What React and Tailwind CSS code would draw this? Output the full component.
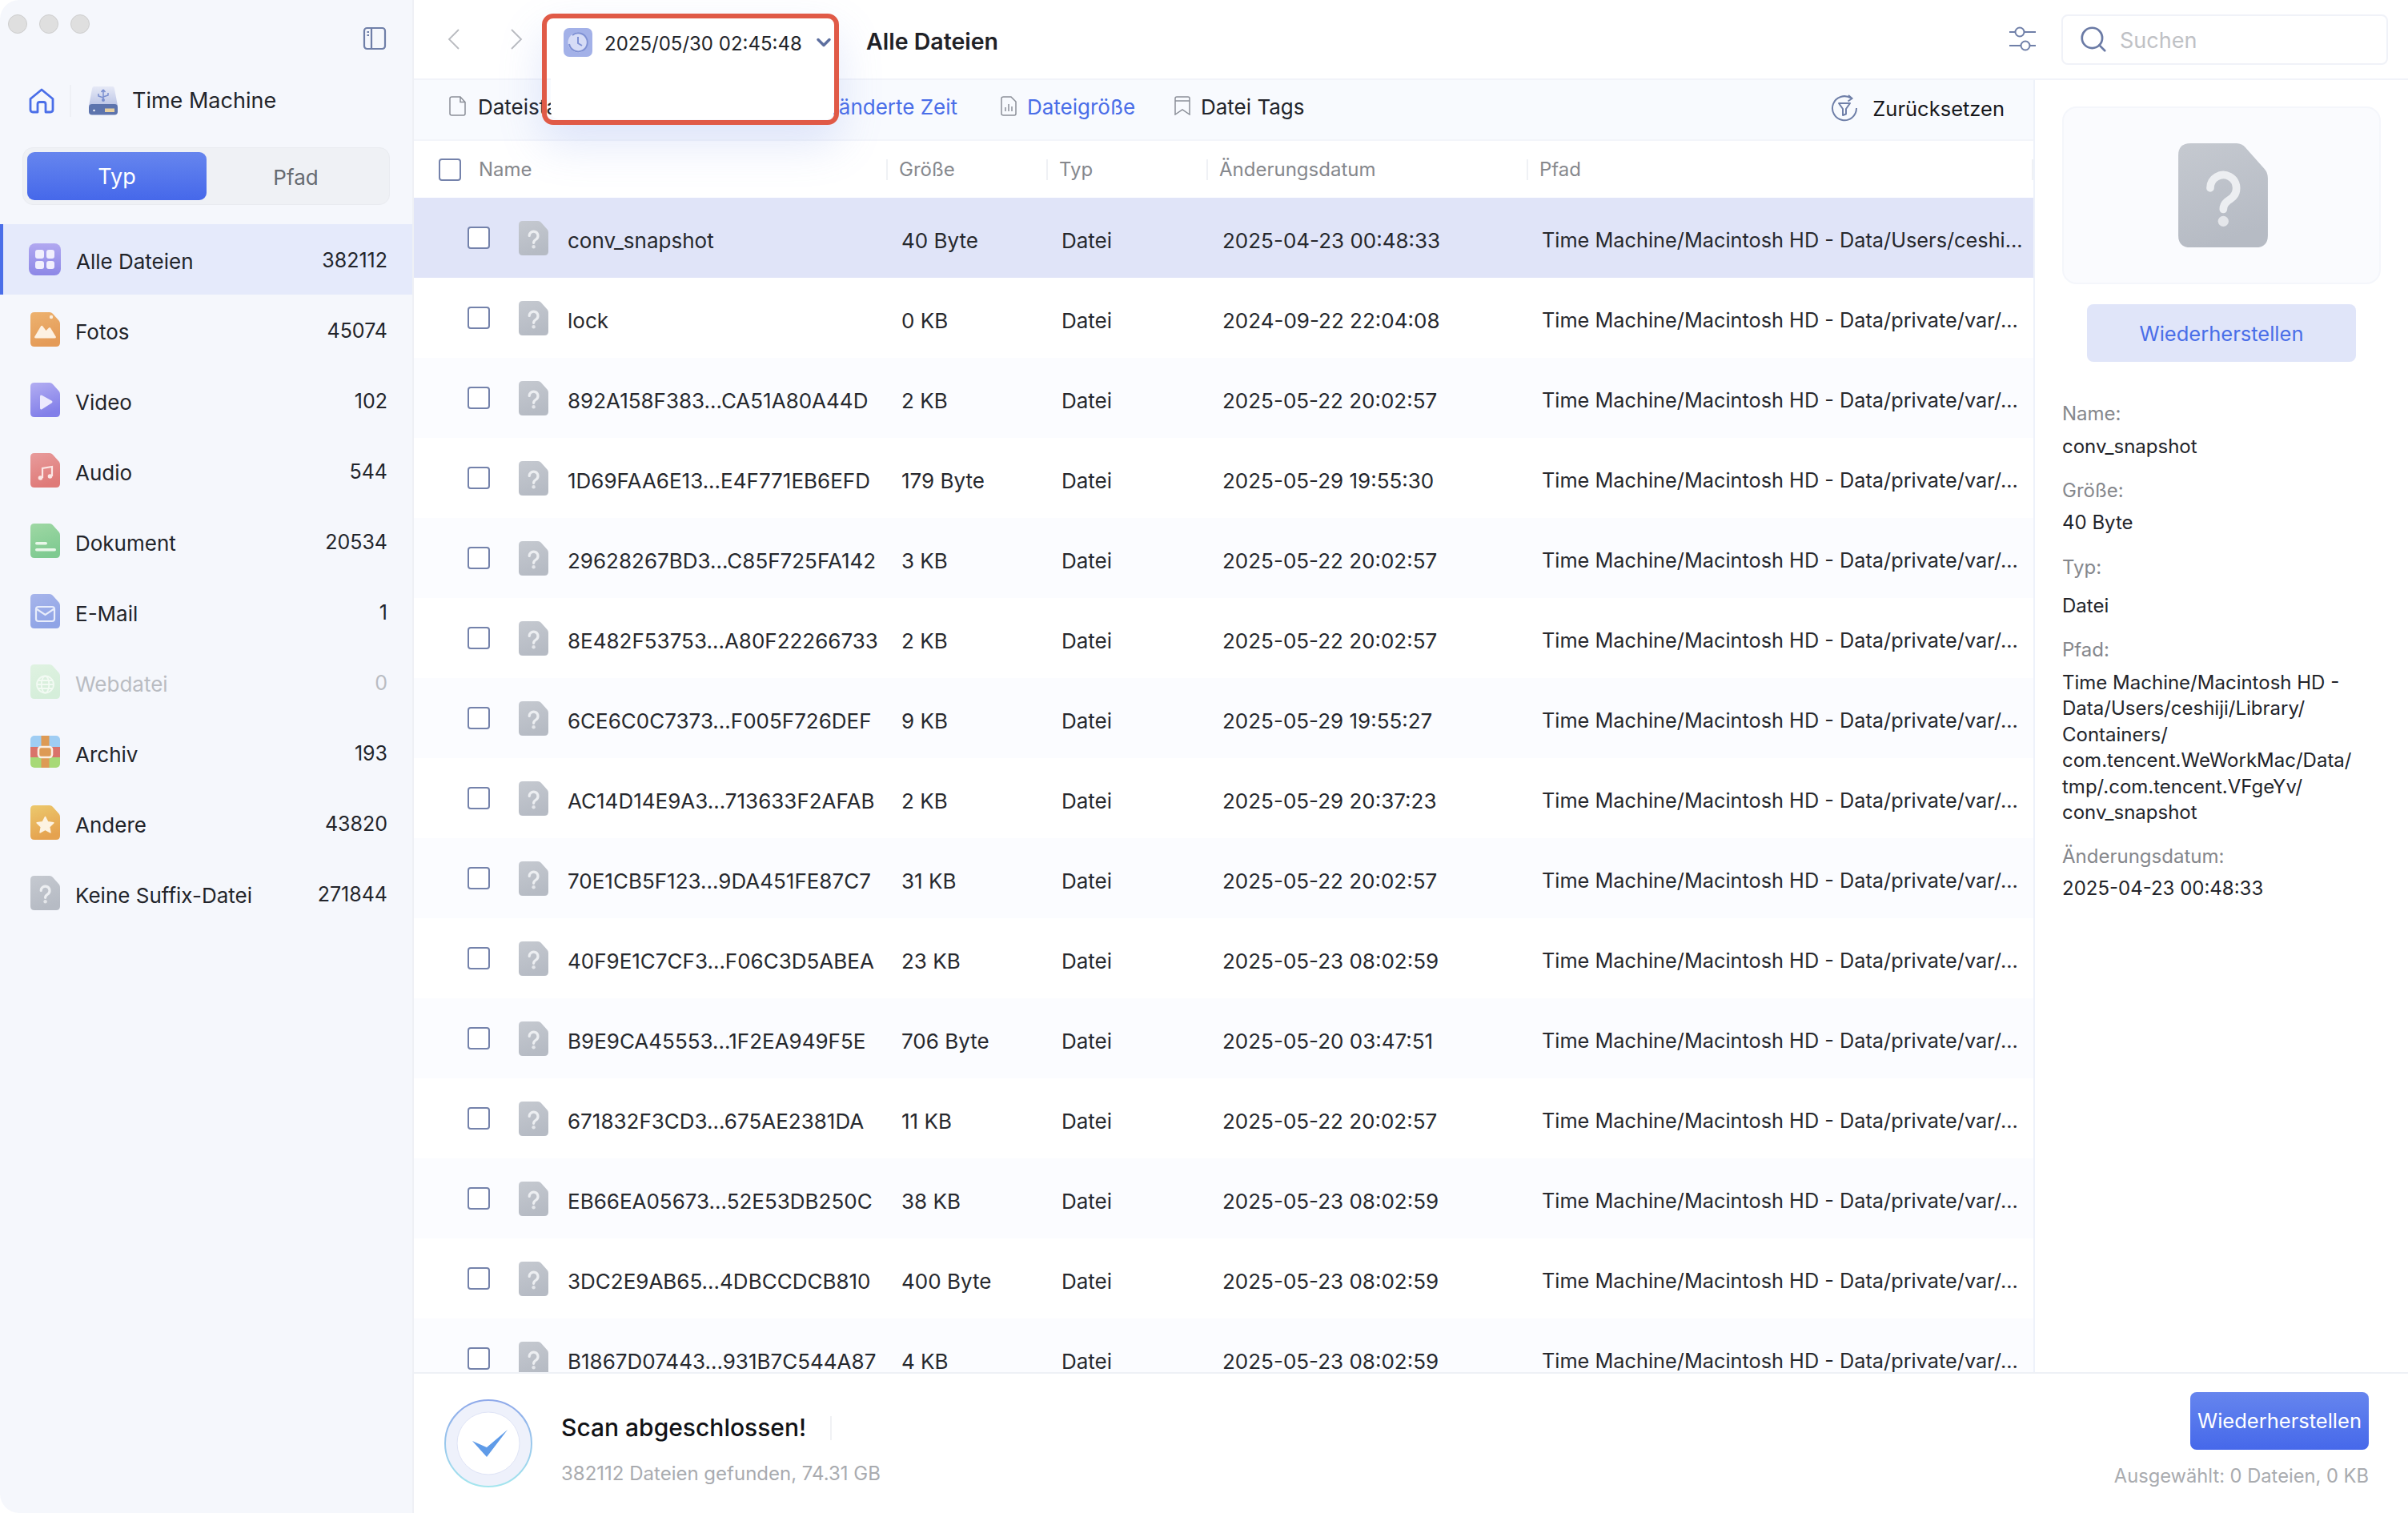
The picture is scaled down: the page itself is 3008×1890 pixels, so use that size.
import { ChevronDown, Search } from 'lucide-react';

const categories = [
  { name: 'Fotos', count: '45074', icon: 'fotos' },
  { name: 'Video', count: '102', icon: 'video' },
  { name: 'Audio', count: '544', icon: 'audio' },
  { name: 'Dokument', count: '20534', icon: 'doc' },
  { name: 'E-Mail', count: '1', icon: 'mail' },
  { name: 'Webdatei', count: '0', icon: 'web', off: true },
  { name: 'Archiv', count: '193', icon: 'zip' },
  { name: 'Andere', count: '43820', icon: 'star' },
  { name: 'Keine Suffix-Datei', count: '271844', icon: 'unknown' },
];

const varPath = 'Time Machine/Macintosh HD - Data/private/var/...';

const files = [
  ['conv_snapshot', '40 Byte', '2025-04-23 00:48:33', 'Time Machine/Macintosh HD - Data/Users/ceshi...'],
  ['lock', '0 KB', '2024-09-22 22:04:08', varPath],
  ['892A158F383...CA51A80A44D', '2 KB', '2025-05-22 20:02:57', varPath],
  ['1D69FAA6E13...E4F771EB6EFD', '179 Byte', '2025-05-29 19:55:30', varPath],
  ['29628267BD3...C85F725FA142', '3 KB', '2025-05-22 20:02:57', varPath],
  ['8E482F53753...A80F22266733', '2 KB', '2025-05-22 20:02:57', varPath],
  ['6CE6C0C7373...F005F726DEF', '9 KB', '2025-05-29 19:55:27', varPath],
  ['AC14D14E9A3...713633F2AFAB', '2 KB', '2025-05-29 20:37:23', varPath],
  ['70E1CB5F123...9DA451FE87C7', '31 KB', '2025-05-22 20:02:57', varPath],
  ['40F9E1C7CF3...F06C3D5ABEA', '23 KB', '2025-05-23 08:02:59', varPath],
  ['B9E9CA45553...1F2EA949F5E', '706 Byte', '2025-05-20 03:47:51', varPath],
  ['671832F3CD3...675AE2381DA', '11 KB', '2025-05-22 20:02:57', varPath],
  ['EB66EA05673...52E53DB250C', '38 KB', '2025-05-23 08:02:59', varPath],
  ['3DC2E9AB65...4DBCCDCB810', '400 Byte', '2025-05-23 08:02:59', varPath],
  ['B1867D07443...931B7C544A87', '4 KB', '2025-05-23 08:02:59', varPath],
];

const SHEET = 'M5 0H24Q26.2 0 27.8 1.8L35.6 10.6Q37 12.2 37 14.4V38Q37 43 32 43H5Q0 43 0 38V5Q0 0 5 0Z';

// one file shaped sheet, the glyph goes on top of it
function Sheet({ id, from, to, children, className = 'w-[37px] h-[43px]' }) {
  return (
    <svg viewBox="0 0 37 43" className={className}>
      <defs>
        <linearGradient id={id} x1="0" y1="0" x2="0.3" y2="1">
          <stop offset="0" stopColor={from} />
          <stop offset="1" stopColor={to} />
        </linearGradient>
      </defs>
      <path d={SHEET} fill={`url(#${id})`} />
      {children}
    </svg>
  );
}

function Question({ id, className }) {
  return (
    <Sheet id={id} from="#c5c9d0" to="#b6bbc4" className={className}>
      <path d="M13.2 18.5a5.4 5.4 0 1 1 8.4 4.5c-2 1.3-3 2.3-3 4.3" fill="none" stroke="#eceef1" strokeWidth="3.2" strokeLinecap="round" />
      <circle cx="18.6" cy="32.2" r="2.2" fill="#e4e6ea" />
    </Sheet>
  );
}

function CategoryIcon({ type }) {
  if (type === 'fotos')
    return (
      <Sheet id="g-fotos" from="#edb26f" to="#e49b58">
        <circle cx="26" cy="6" r="2.2" fill="#fbeedd" />
        <path d="M5 31L13 17.5Q14.2 16 15.4 17.5L19.5 23L23 19.5Q24.2 18.5 25.2 19.8L32 31Q32 32.5 30 32.5H7Q5 32.5 5 31Z" fill="#fdf1e2" />
      </Sheet>
    );
  if (type === 'video')
    return (
      <Sheet id="g-video" from="#b3aef2" to="#827fe9">
        <path d="M12 17.5Q12 14.5 14.7 16L26.5 22.5Q28.5 24 26.5 25.5L14.7 33Q12 34.5 12 31.5Z" fill="#eceafd" />
      </Sheet>
    );
  if (type === 'audio')
    return (
      <Sheet id="g-audio" from="#e89c9c" to="#df7a78">
        <path d="M15 31V19L27 17V29" fill="none" stroke="#fbe6e4" strokeWidth="2.2" />
        <circle cx="12.5" cy="31" r="2.8" fill="#fbe6e4" />
        <circle cx="24.5" cy="29" r="2.8" fill="#fbe6e4" />
      </Sheet>
    );
  if (type === 'doc')
    return (
      <Sheet id="g-doc" from="#9fd8a4" to="#7fca91">
        <rect x="6" y="23" width="15" height="3.6" rx="1.8" fill="#e9f7ea" />
        <rect x="6" y="31" width="26" height="3.6" rx="1.8" fill="#e9f7ea" />
      </Sheet>
    );
  if (type === 'mail')
    return (
      <Sheet id="g-mail" from="#a7b5eb" to="#8fa4e6">
        <rect x="7" y="16" width="23" height="18" rx="3" fill="none" stroke="#e8edfb" strokeWidth="2.2" />
        <path d="M8 19L18.5 26L29 19" fill="none" stroke="#e8edfb" strokeWidth="2.2" />
      </Sheet>
    );
  if (type === 'web')
    return (
      <Sheet id="g-web" from="#dff2e1" to="#d5eeda">
        <g fill="none" stroke="#f2faf3" strokeWidth="1.8">
          <circle cx="18.5" cy="25" r="10.5" />
          <ellipse cx="18.5" cy="25" rx="4.8" ry="10.5" />
          <path d="M8 25H29M9.5 20H27.5M9.5 30H27.5" />
        </g>
      </Sheet>
    );
  if (type === 'zip')
    return (
      <svg viewBox="0 0 37 40" className="w-[37px] h-[40px]">
        <defs>
          <clipPath id="zip-clip">
            <rect width="37" height="40" rx="5" />
          </clipPath>
        </defs>
        <g clipPath="url(#zip-clip)">
          <rect width="37" height="14" fill="#9fcdf3" />
          <rect y="14" width="37" height="13" fill="#d9736a" />
          <rect y="27" width="37" height="13" fill="#a7d977" />
          <rect x="13.5" width="10" height="40" fill="#dd9a55" />
          <rect x="10" y="14" width="17" height="13" rx="3.5" fill="#dd9a55" stroke="#fbeee3" strokeWidth="2.6" />
        </g>
      </svg>
    );
  if (type === 'star')
    return (
      <Sheet id="g-star" from="#ecc96d" to="#e5a24f">
        <path d="M18.5 14.5L21.7 20.8L28.8 21.9L23.6 26.8L24.9 33.8L18.5 30.4L12.1 33.8L13.4 26.8L8.2 21.9L15.3 20.8Z" fill="#fdf3e2" stroke="#fdf3e2" strokeWidth="1.6" strokeLinejoin="round" />
      </Sheet>
    );
  return <Question id="g-side-unknown" />;
}

function Category({ item }) {
  return (
    <div className="h-[88px] pl-[38px] pr-[31px] flex items-center">
      <div className="w-[56px] shrink-0 flex items-center">
        <CategoryIcon type={item.icon} />
      </div>
      <span className={`mt-[6px] text-[26px] ${item.off ? 'text-[#b9bcc2]' : 'text-[#22242a]'}`}>{item.name}</span>
      <span className={`mt-[6px] ml-auto text-[25px] ${item.off ? 'text-[#b9bcc2]' : 'text-[#22242a]'}`}>{item.count}</span>
    </div>
  );
}

function Sidebar() {
  return (
    <aside className="w-[517px] shrink-0 bg-[#f5f7fc] border-r-2 border-[#eef0f5] flex flex-col">
      <div className="h-[104px] pl-[10px] pr-[32px] flex items-start justify-between">
        <div className="flex mt-[18px] gap-[15px]">
          <span className="size-[24px] rounded-full bg-[#dfdfdf] border border-[#cdcdcd]" />
          <span className="size-[24px] rounded-full bg-[#dfdfdf] border border-[#cdcdcd]" />
          <span className="size-[24px] rounded-full bg-[#dfdfdf] border border-[#cdcdcd]" />
        </div>
        <svg viewBox="0 0 30 30" className="size-[30px] mt-[33px]" fill="none" stroke="#6f7fa8" strokeWidth="2.2">
          <rect x="2" y="2" width="26" height="26" rx="3.5" />
          <path d="M11 2V28M5.5 7H8M5.5 11H8" />
        </svg>
      </div>
      <div className="h-[44px] flex items-center pl-[36px]">
        <svg viewBox="0 0 32 32" className="size-[32px]" fill="none" stroke="#4a6ee8" strokeWidth="2.8" strokeLinejoin="round">
          <path d="M2 13.5L16 2L30 13.5V27Q30 30 27 30H21V20Q21 17.5 18.5 17.5H13.5Q11 17.5 11 20V30H5Q2 30 2 27Z" />
        </svg>
        <span className="w-[2px] h-[40px] ml-[19px] bg-[#eef0f5]" />
        <svg viewBox="0 0 36 36" className="size-[36px] ml-[22px]">
          <defs>
            <linearGradient id="drive-top" x1="0" y1="0" x2="0" y2="1">
              <stop offset="0" stopColor="#e6e9f6" />
              <stop offset="1" stopColor="#bcc5e6" />
            </linearGradient>
          </defs>
          <path d="M4 3Q4.3 0 7 0H29Q32 0 32 3L36 24H0Z" fill="url(#drive-top)" />
          <rect y="22" width="36" height="13.5" rx="4" fill="#5d74ad" />
          <circle cx="6.5" cy="30" r="1.2" fill="#fff" />
          <path d="M20 27.5H32V32H20Z" fill="#e7cf9f" />
          <path d="M18 4V17M18 4L15.5 7M18 4L20.5 7M12 9V12L18 14M24 8V11L18 13" fill="none" stroke="#7a8fd0" strokeWidth="1.5" />
          <circle cx="18" cy="17" r="2" fill="#7a8fd0" />
        </svg>
        <span className="ml-[18px] text-[27px] text-[#22242a]">Time Machine</span>
      </div>
      <div className="mt-[36px] mx-[28px] h-[72px] p-[5px] rounded-[13px] bg-[#eff1f5] border border-[#e9ebf0] flex">
        <div className="w-[224px] pt-[3px] rounded-[9px] bg-gradient-to-b from-[#6685ee] to-[#4668ea] text-white text-[27px] flex items-center justify-center">Typ</div>
        <div className="flex-1 pt-[3px] text-[#666a70] text-[26px] flex items-center justify-center">Pfad</div>
      </div>
      <div className="mt-[24px] h-[88px] pl-[32px] pr-[31px] bg-[#e5eafb] border-l-4 border-[#4a6ee8] flex items-center -mb-px">
        <div className="w-[59px] shrink-0">
          <div className="size-[40px] rounded-[8px] bg-gradient-to-b from-[#b1a8f0] to-[#8d87e6] grid grid-cols-2 gap-[3px] p-[8px]">
            <span className="rounded-[3px] bg-[#f1effd]" />
            <span className="rounded-[3px] bg-[#f1effd]" />
            <span className="rounded-[3px] bg-[#f1effd]" />
            <span className="rounded-[3px] bg-[#f1effd]" />
          </div>
        </div>
        <span className="mt-[4px] text-[26px] text-[#22242a]">Alle Dateien</span>
        <span className="mt-[4px] ml-auto text-[25px] text-[#22242a]">382112</span>
      </div>
      {categories.map((item) => (
        <Category key={item.name} item={item} />
      ))}
    </aside>
  );
}

function TopBar() {
  return (
    <header className="h-[100px] shrink-0 border-b-2 border-[#f1f3f9] flex items-center pl-[42px] pr-[25px]">
      <svg viewBox="0 0 16 26" className="w-[16px] h-[26px]" fill="none" stroke="#b9bbc0" strokeWidth="1.8">
        <path d="M14 1L2 13L14 25" />
      </svg>
      <svg viewBox="0 0 16 26" className="w-[16px] h-[26px] ml-[62px]" fill="none" stroke="#b9bbc0" strokeWidth="1.8">
        <path d="M2 1L14 13L2 25" />
      </svg>
      <span className="ml-[429px] mt-[6px] text-[28.5px] font-semibold text-[#1f2126]">Alle Dateien</span>
      <svg viewBox="0 0 34 32" className="w-[34px] h-[32px] ml-auto" fill="none" stroke="#6f7fa8" strokeWidth="2">
        <path d="M0 7H7M19 7H33M0 24H14M26 24H33" />
        <circle cx="13" cy="7" r="5.5" />
        <circle cx="20" cy="24" r="5.5" />
      </svg>
      <div className="ml-[31px] w-[408px] h-[63px] rounded-[8px] border-2 border-[#f0f2f8] flex items-center pl-[19px]">
        <Search className="size-[38px] text-[#6a7aa5]" strokeWidth={1.7} />
        <span className="ml-[14px] mt-[5px] text-[27px] text-[#bfc1c5]">Suchen</span>
      </div>
    </header>
  );
}

function FilterBar() {
  return (
    <div className="h-[76px] shrink-0 bg-[#f8fafe] border-b-2 border-[#f3f5fa] flex items-center pl-[44px] pr-[36px] text-[26px]">
      <div className="w-[249px] flex items-center pb-[8px]">
        <svg viewBox="0 0 21 25" className="w-[21px] h-[25px] mr-[15px] mb-[2px]" fill="none" stroke="#8b8f98" strokeWidth="1.5">
          <path d="M3.5 1H14L20 7.5V22Q20 24 18 24H3.5Q1 24 1 22V3Q1 1 3.5 1ZM14 1V7.5H20" />
        </svg>
        <span className="text-[#22242a]">Dateistatus</span>
      </div>
      <div className="w-[167px] flex items-center pb-[8px]">
        <span className="ml-[30px] text-[#22242a]">Dateityp</span>
      </div>
      <div className="w-[273px] flex items-center pb-[8px]">
        <span className="ml-[36px] text-[#4a6ee8]">Geänderte Zeit</span>
      </div>
      <div className="w-[217px] flex items-center pb-[8px]">
        <svg viewBox="0 0 20 25" className="w-[20px] h-[25px] mb-[2px]" fill="none" stroke="#8b8f98" strokeWidth="1.5">
          <path d="M3.5 1H13L19 7V22Q19 24 17 24H3.5Q1 24 1 22V3Q1 1 3.5 1Z" />
          <path d="M6 19V14M10 19V10M14 19V13" />
        </svg>
        <span className="ml-[13px] text-[#4a6ee8]">Dateigröße</span>
      </div>
      <div className="flex items-center pb-[8px]">
        <svg viewBox="0 0 20 24" className="w-[20px] h-[24px] mb-[2px]" fill="none" stroke="#8b8f98" strokeWidth="1.5">
          <path d="M3 1H17Q19 1 19 3V23L10 17L1 23V3Q1 1 3 1Z" />
          <path d="M1 6H19" />
        </svg>
        <span className="ml-[13px] text-[#22242a]">Datei Tags</span>
      </div>
      <svg viewBox="0 0 34 34" className="size-[34px] ml-auto mb-[4px]" fill="none" stroke="#6f7fa8" strokeWidth="2">
        <path d="M25 4.5A15 15 0 1 0 32 17" />
        <path d="M22 1L26.5 5L21.5 8.5" />
        <path d="M10 11H24L19 18V24.5L15 26V18Z" strokeLinejoin="round" />
      </svg>
      <span className="ml-[18px] mb-[2px] text-[25.5px] text-[#17181c]">Zurücksetzen</span>
    </div>
  );
}

function TableHeader() {
  const cols = [
    ['Name', 'w-[531px] pl-[22px]'],
    ['Größe', 'w-[200px] pl-[14px] border-l-2'],
    ['Typ', 'w-[200px] pl-[14px] border-l-2'],
    ['Änderungsdatum', 'w-[400px] pl-[14px] border-l-2'],
    ['Pfad', 'flex-1 pl-[14px] border-l-2 border-r-2'],
  ];
  return (
    <div className="h-[71px] shrink-0 flex items-center pl-[31px] text-[24px] text-[#86888d]">
      <span className="size-[28px] shrink-0 rounded-[4px] border-2 border-[#7482ab] bg-white" />
      {cols.map(([label, cls]) => (
        <div key={label} className={`h-[26px] flex items-center border-[#eff1f5] ${cls}`}>{label}</div>
      ))}
    </div>
  );
}

function FileRow({ file, index }) {
  const bg = index === 0 ? 'bg-[#e0e4f8]' : index % 2 === 0 ? 'bg-[#fbfcff]' : 'bg-white';
  return (
    <div className={`h-[100px] shrink-0 flex items-center pl-[67px] text-[26px] text-[#26282d] ${bg}`}>
      <span className="size-[28px] shrink-0 rounded-[4px] border-2 border-[#7482ab] bg-white" />
      <div className="ml-[36px] w-[37px] shrink-0 flex">
        <Question id={`g-row-${index}`} />
      </div>
      <span className="ml-[24px] mt-[6px] w-[417px] shrink-0 whitespace-nowrap">{file[0]}</span>
      <span className="mt-[6px] w-[200px] shrink-0">{file[1]}</span>
      <span className="mt-[6px] w-[201px] shrink-0">Datei</span>
      <span className="mt-[6px] w-[399px] shrink-0">{file[2]}</span>
      <span className="mt-[6px] text-[25.3px] whitespace-nowrap">{file[3]}</span>
    </div>
  );
}

function DetailPanel() {
  return (
    <aside className="flex-1 flex flex-col px-[34px] pt-[33px] text-[24px] text-[#22242a]">
      <div className="h-[222px] rounded-[18px] bg-[#fafbfe] border-2 border-[#f4f6fb] flex items-center justify-center">
        <Question id="g-preview" className="w-[112px] h-[130px] ml-[4px]" />
      </div>
      <div className="mt-[25px] mx-[31px] h-[72px] pt-[2px] rounded-[8px] bg-[#e0e5f9] text-[#4a6ee8] text-[25.5px] flex items-center justify-center">Wiederherstellen</div>
      <div className="mt-[49px] text-[#85878c] leading-[32px]">Name:</div>
      <div className="mt-[9px] leading-[32px]">conv_snapshot</div>
      <div className="mt-[23px] text-[#85878c] leading-[32px]">Größe:</div>
      <div className="mt-[8px] leading-[32px]">40 Byte</div>
      <div className="mt-[24px] text-[#85878c] leading-[32px]">Typ:</div>
      <div className="mt-[16px] leading-[32px]">Datei</div>
      <div className="mt-[23px] text-[#85878c] leading-[32px]">Pfad:</div>
      <div className="mt-[9px] leading-[32.4px] whitespace-pre-line">
        {'Time Machine/Macintosh HD -\nData/Users/ceshiji/Library/\nContainers/\ncom.tencent.WeWorkMac/Data/\ntmp/.com.tencent.VFgeYv/\nconv_snapshot'}
      </div>
      <div className="mt-[23px] text-[#85878c] leading-[32px]">Änderungsdatum:</div>
      <div className="mt-[8px] leading-[32px]">2025-04-23 00:48:33</div>
    </aside>
  );
}

function Footer() {
  return (
    <footer className="h-[176px] shrink-0 border-t-2 border-[#eef1f6] flex items-center pl-[38px] pr-[49px] bg-white">
      <svg viewBox="0 0 110 110" className="size-[110px] shrink-0">
        <defs>
          <linearGradient id="ring" x1="0" y1="0" x2="0" y2="1">
            <stop offset="0" stopColor="#8fa9ea" />
            <stop offset="1" stopColor="#a4e6ee" />
          </linearGradient>
        </defs>
        <circle cx="55" cy="55" r="54" fill="#eef1fb" stroke="url(#ring)" strokeWidth="2" />
        <circle cx="55" cy="55" r="39" fill="#fff" stroke="#dfe4f6" strokeWidth="1" />
        <path d="M35 52L53 72L79 38L53 60Z" fill="#5f9be8" />
      </svg>
      <div className="ml-[36px] mt-[14px] flex flex-col">
        <div className="flex items-center h-[40px]">
          <span className="text-[30px] font-medium text-[#111216]">Scan abgeschlossen!</span>
          <span className="ml-[30px] w-[2px] h-[30px] bg-[#f0f1f4]" />
        </div>
        <span className="mt-[21px] text-[24px] leading-[32px] text-[#a9abaf]">382112 Dateien gefunden, 74.31 GB</span>
      </div>
      <div className="ml-auto pb-[7px] flex flex-col items-end">
        <div className="w-[223px] h-[72px] rounded-[8px] bg-gradient-to-b from-[#6685ee] to-[#4668ea] text-white text-[25.5px] flex items-center justify-center">Wiederherstellen</div>
        <span className="mt-[17px] text-[23.7px] leading-[32px] text-[#a9abaf]">Ausgewählt: 0 Dateien, 0 KB</span>
      </div>
    </footer>
  );
}

// the date picker popup that lies over the top bar and the filter bar
function VersionPopup() {
  return (
    <div className="absolute left-[160px] top-[17px] w-[371px] h-[139px] rounded-[14px] border-[6px] border-[#e05a47] z-10 shadow-[0_24px_55px_rgba(110,140,230,0.2)]">
      <div className="flex items-center pl-[21px] pt-[9px]">
        <svg viewBox="0 0 36 36" className="size-[36px] shrink-0">
          <rect width="36" height="36" rx="7" fill="#a3b1e8" />
          <circle cx="18" cy="18" r="12.5" fill="#d6dcf6" />
          <path d="M7 20A11.5 11.5 0 1 0 11 9" fill="none" stroke="#7e90d4" strokeWidth="2" />
          <path d="M18 11V19L23 22" fill="none" stroke="#7e90d4" strokeWidth="2" />
        </svg>
        <span className="ml-[15px] mt-[5px] text-[24px] text-[#22242a] whitespace-nowrap">2025/05/30 02:45:48</span>
        <ChevronDown className="ml-[13px] size-[28px] shrink-0 text-[#5d6f9f]" strokeWidth={3} />
      </div>
      <div className="ml-[5px] mt-[15px] h-[61px] rounded-[10px] bg-white" />
    </div>
  );
}

export default function App() {
  return (
    <div className="w-[3008px] h-[1890px] bg-white font-['Inter','Noto_Sans',sans-serif] overflow-hidden">
      <div className="w-full h-full rounded-[24px] overflow-hidden flex bg-white">
        <Sidebar />
        <main className="flex-1 min-w-0 flex flex-col relative">
          <TopBar />
          <div className="flex-1 min-h-0 flex">
            <div className="w-[2025px] shrink-0 border-r-2 border-[#eef2fa] flex flex-col overflow-hidden">
              <FilterBar />
              <TableHeader />
              <div className="flex-1 min-h-0 overflow-hidden flex flex-col">
                {files.map((file, i) => (
                  <FileRow key={file[0]} file={file} index={i} />
                ))}
              </div>
            </div>
            <DetailPanel />
          </div>
          <Footer />
          <VersionPopup />
        </main>
      </div>
    </div>
  );
}
